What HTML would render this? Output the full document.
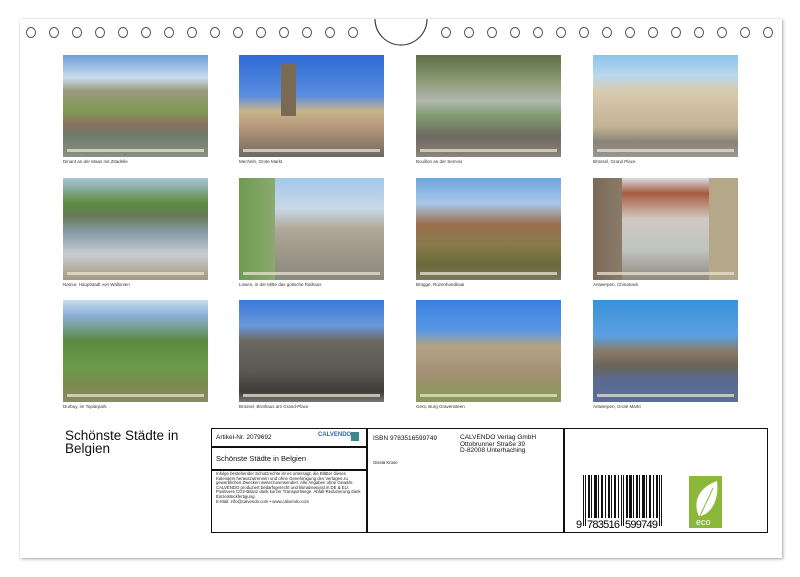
<!DOCTYPE html>
<html><head><meta charset="utf-8"><style>
*{margin:0;padding:0;box-sizing:border-box}
body{width:800px;height:577px;background:#fff;position:relative;overflow:hidden;font-family:"Liberation Sans",sans-serif;color:#111}
.page{position:absolute;left:20px;top:19px;width:762px;height:539px;background:#fff;box-shadow:1px 1px 3px rgba(0,0,0,.35),0 0 1px rgba(0,0,0,.15)}
.hole{position:absolute;top:27px;width:10px;height:11px;border:1px solid #555;border-radius:50%}
.ph{position:absolute;width:145px;height:102px;overflow:hidden}
.ph:after{content:"";position:absolute;left:4px;right:4px;bottom:5px;height:3px;background:#e8e2d0;opacity:.75}
.cap{position:absolute;font-size:4.5px;color:#333;white-space:nowrap}
.tb{position:absolute;border:1.5px solid #111}
</style></head><body>
<div class="page"></div>
<svg style="position:absolute;left:374px;top:19px" width="54" height="28"><path d="M1 0 A26 26 0 0 0 53 0" fill="#fff" stroke="#444" stroke-width="1.2"/></svg>
<div id="holes"></div>
<script>
var h='';for(var i=0;i<15;i++){h+='<div class="hole" style="left:'+(26+i*23)+'px"></div>';h+='<div class="hole" style="left:'+(441+i*23)+'px"></div>';}
document.getElementById('holes').innerHTML=h;
</script>

<!-- row 1 -->
<div class="ph" style="left:63px;top:55px;background:linear-gradient(180deg,#6ea0d8 0%,#c9dbee 22%,#9a9a7e 35%,#7f9a52 55%,#8a7060 68%,#6d7a6a 78%,#8a9080 100%)"></div>
<div class="cap" style="left:63px;top:159px">Dinant an der Maas mit Zitadelle</div>
<div class="ph" style="left:239px;top:55px;background:linear-gradient(180deg,transparent 0%,transparent 13%,#7a6a52 13%,#7a6a52 100%) 42px 0/15px 60% no-repeat,linear-gradient(180deg,#2f6ad6 0%,#5a8ee0 40%,#c8b48a 55%,#b09078 75%,#6a6a60 100%)"></div>
<div class="cap" style="left:239px;top:159px">Mecheln, Grote Markt</div>
<div class="ph" style="left:416px;top:55px;background:linear-gradient(180deg,#5e7048 0%,#8a9a74 25%,#b0b8b0 45%,#7f9a70 60%,#6e6a62 80%,#8a857a 100%)"></div>
<div class="cap" style="left:416px;top:159px">Bouillon an der Semois</div>
<div class="ph" style="left:593px;top:55px;background:linear-gradient(180deg,#8cc4ec 0%,#b8d8ee 20%,#d8cbb0 35%,#c4b294 70%,#8a8478 85%,#9a968e 100%)"></div>
<div class="cap" style="left:593px;top:159px">Brüssel, Grand Place</div>
<!-- row 2 -->
<div class="ph" style="left:63px;top:178px;background:linear-gradient(180deg,#a8c4dc 0%,#5e8a3e 25%,#6a7a5c 38%,#8aa0ae 55%,#c8ccd0 75%,#a49880 100%)"></div>
<div class="cap" style="left:63px;top:282px">Namur, Hauptstadt von Wallonien</div>
<div class="ph" style="left:239px;top:178px;background:linear-gradient(90deg,#6f9a50 0%,#8aaa70 25%,transparent 25%),linear-gradient(180deg,#a4c8ea 0%,#c8d8e8 30%,#b0a898 50%,#9a9286 80%,#8a8a80 100%)"></div>
<div class="cap" style="left:239px;top:282px">Löwen, in der Mitte das gotische Rathaus</div>
<div class="ph" style="left:416px;top:178px;background:linear-gradient(180deg,#6ea6e0 0%,#a8c8ea 25%,#9a6e4e 45%,#8a7a4a 65%,#6a6a3a 85%,#7a7860 100%)"></div>
<div class="cap" style="left:416px;top:282px">Brügge, Rozenhoedkaai</div>
<div class="ph" style="left:593px;top:178px;background:linear-gradient(90deg,#7a6a5a 0%,#8a7a68 20%,transparent 20%,transparent 80%,#b4a888 80%),linear-gradient(180deg,#d8dce4 0%,#a85a40 15%,#d0c8c0 40%,#c0c4c0 70%,#908a80 100%)"></div>
<div class="cap" style="left:593px;top:282px">Antwerpen, Chinatown</div>
<!-- row 3 -->
<div class="ph" style="left:63px;top:300px;background:linear-gradient(180deg,#c8dcf0 0%,#8cb0d8 15%,#5a8a40 40%,#6a9a48 65%,#7a8a50 85%,#8a8a68 100%)"></div>
<div class="cap" style="left:63px;top:404px">Durbuy, im Topiarpark</div>
<div class="ph" style="left:239px;top:300px;background:linear-gradient(180deg,#3a78d8 0%,#6a98dc 25%,#6a6860 40%,#5a5852 70%,#3e3c38 90%,#7a7870 100%)"></div>
<div class="cap" style="left:239px;top:404px">Brüssel, Brothaus am Grand-Place</div>
<div class="ph" style="left:416px;top:300px;background:linear-gradient(180deg,#3a80e0 0%,#5a98e4 30%,#b4a484 45%,#a08e70 75%,#8a9a5a 95%)"></div>
<div class="cap" style="left:416px;top:404px">Gent, Burg Gravensteen</div>
<div class="ph" style="left:593px;top:300px;background:linear-gradient(180deg,#3a90d8 0%,#5aa0e0 35%,#8a7a6a 50%,#6a6458 65%,#5a6a90 78%,#5a6e98 100%)"></div>
<div class="cap" style="left:593px;top:404px">Antwerpen, Grote Markt</div>

<div style="position:absolute;left:65px;top:429px;font-size:13.5px;line-height:13px">Schönste Städte in<br>Belgien</div>

<div class="tb" style="left:211px;top:428px;width:557px;height:105px"></div>
<div style="position:absolute;left:366px;top:428px;width:1.5px;height:105px;background:#111"></div>
<div style="position:absolute;left:563px;top:428px;width:1.5px;height:105px;background:#111"></div>
<div style="position:absolute;left:211px;top:446px;width:156px;height:1.5px;background:#111"></div>
<div style="position:absolute;left:211px;top:469px;width:156px;height:1.5px;background:#111"></div>
<div style="position:absolute;left:216px;top:434px;font-size:6.5px">Artikel-Nr. 2079692</div>
<div style="position:absolute;left:318px;top:432px;font-size:6px;color:#2a6aa8;font-weight:bold">CALVENDO</div>
<div style="position:absolute;left:351px;top:432px;width:8px;height:9px;background:#3a8a8a"></div>
<div style="position:absolute;left:216px;top:454px;font-size:7.5px">Schönste Städte in Belgien</div>
<div style="position:absolute;left:216px;top:472px;font-size:4.3px;line-height:4.6px;width:150px;color:#222">Infolge bestehender Schutzrechte ist es untersagt, die Blätter dieses Kalenders herauszutrennen und ohne Genehmigung des Verlages zu gewerblichen Zwecken weiterzuverwenden. Alle Angaben ohne Gewähr.<br>CALVENDO produziert bedarfsgerecht und klimabewusst in DE &amp; EU. Positivere CO2-Bilanz dank kurzer Transportwege. Abfall-Reduzierung dank Einzelstückfertigung.<br>E-Mail: info@calvendo.com • www.calvendo.com</div>
<div style="position:absolute;left:373px;top:435px;font-size:6.5px">ISBN 9783516599749</div>
<div style="position:absolute;left:373px;top:460px;font-size:4.3px">Gisela Kruse</div>
<div style="position:absolute;left:460px;top:435px;font-size:6.5px;line-height:6.5px">CALVENDO Verlag GmbH<br>Ottobrunner Straße 39<br>D-82008 Unterhaching</div>

<svg style="position:absolute;left:576px;top:474px" width="94" height="56">
<g fill="#111">
<rect x="7" y="1" width="1" height="51"/><rect x="9" y="1" width="1" height="51"/>
<rect x="12" y="1" width="2" height="43"/><rect x="15" y="1" width="1" height="43"/><rect x="18" y="1" width="3" height="43"/><rect x="22" y="1" width="1" height="43"/><rect x="25" y="1" width="2" height="43"/><rect x="29" y="1" width="1" height="43"/><rect x="32" y="1" width="2" height="43"/><rect x="35" y="1" width="1" height="43"/><rect x="38" y="1" width="2" height="43"/><rect x="42" y="1" width="1" height="43"/>
<rect x="45" y="1" width="1" height="51"/><rect x="47" y="1" width="1" height="51"/>
<rect x="50" y="1" width="2" height="43"/><rect x="53" y="1" width="3" height="43"/><rect x="57" y="1" width="1" height="43"/><rect x="60" y="1" width="2" height="43"/><rect x="63" y="1" width="1" height="43"/><rect x="66" y="1" width="3" height="43"/><rect x="70" y="1" width="1" height="43"/><rect x="73" y="1" width="2" height="43"/><rect x="77" y="1" width="1" height="43"/><rect x="80" y="1" width="2" height="43"/>
<rect x="83" y="1" width="1" height="51"/><rect x="85" y="1" width="1" height="51"/>
</g>
<text x="0" y="54" font-size="11" font-family="Liberation Sans">9</text>
<text x="11" y="54" font-size="11" font-family="Liberation Sans" textLength="33">783516</text>
<text x="49" y="54" font-size="11" font-family="Liberation Sans" textLength="33">599749</text>
</svg>

<svg style="position:absolute;left:689px;top:476px" width="33" height="52">
<rect width="33" height="52" fill="#8cb83a"/>
<path d="M10 40 C4 28 8 12 28 5 C30 22 24 36 12 40 Z" fill="#fff"/>
<path d="M11 40 L24 12" stroke="#8cb83a" stroke-width="1"/>
<text x="7" y="49" font-size="9" fill="#fff" font-family="Liberation Sans">eco</text>
</svg>
</body></html>
